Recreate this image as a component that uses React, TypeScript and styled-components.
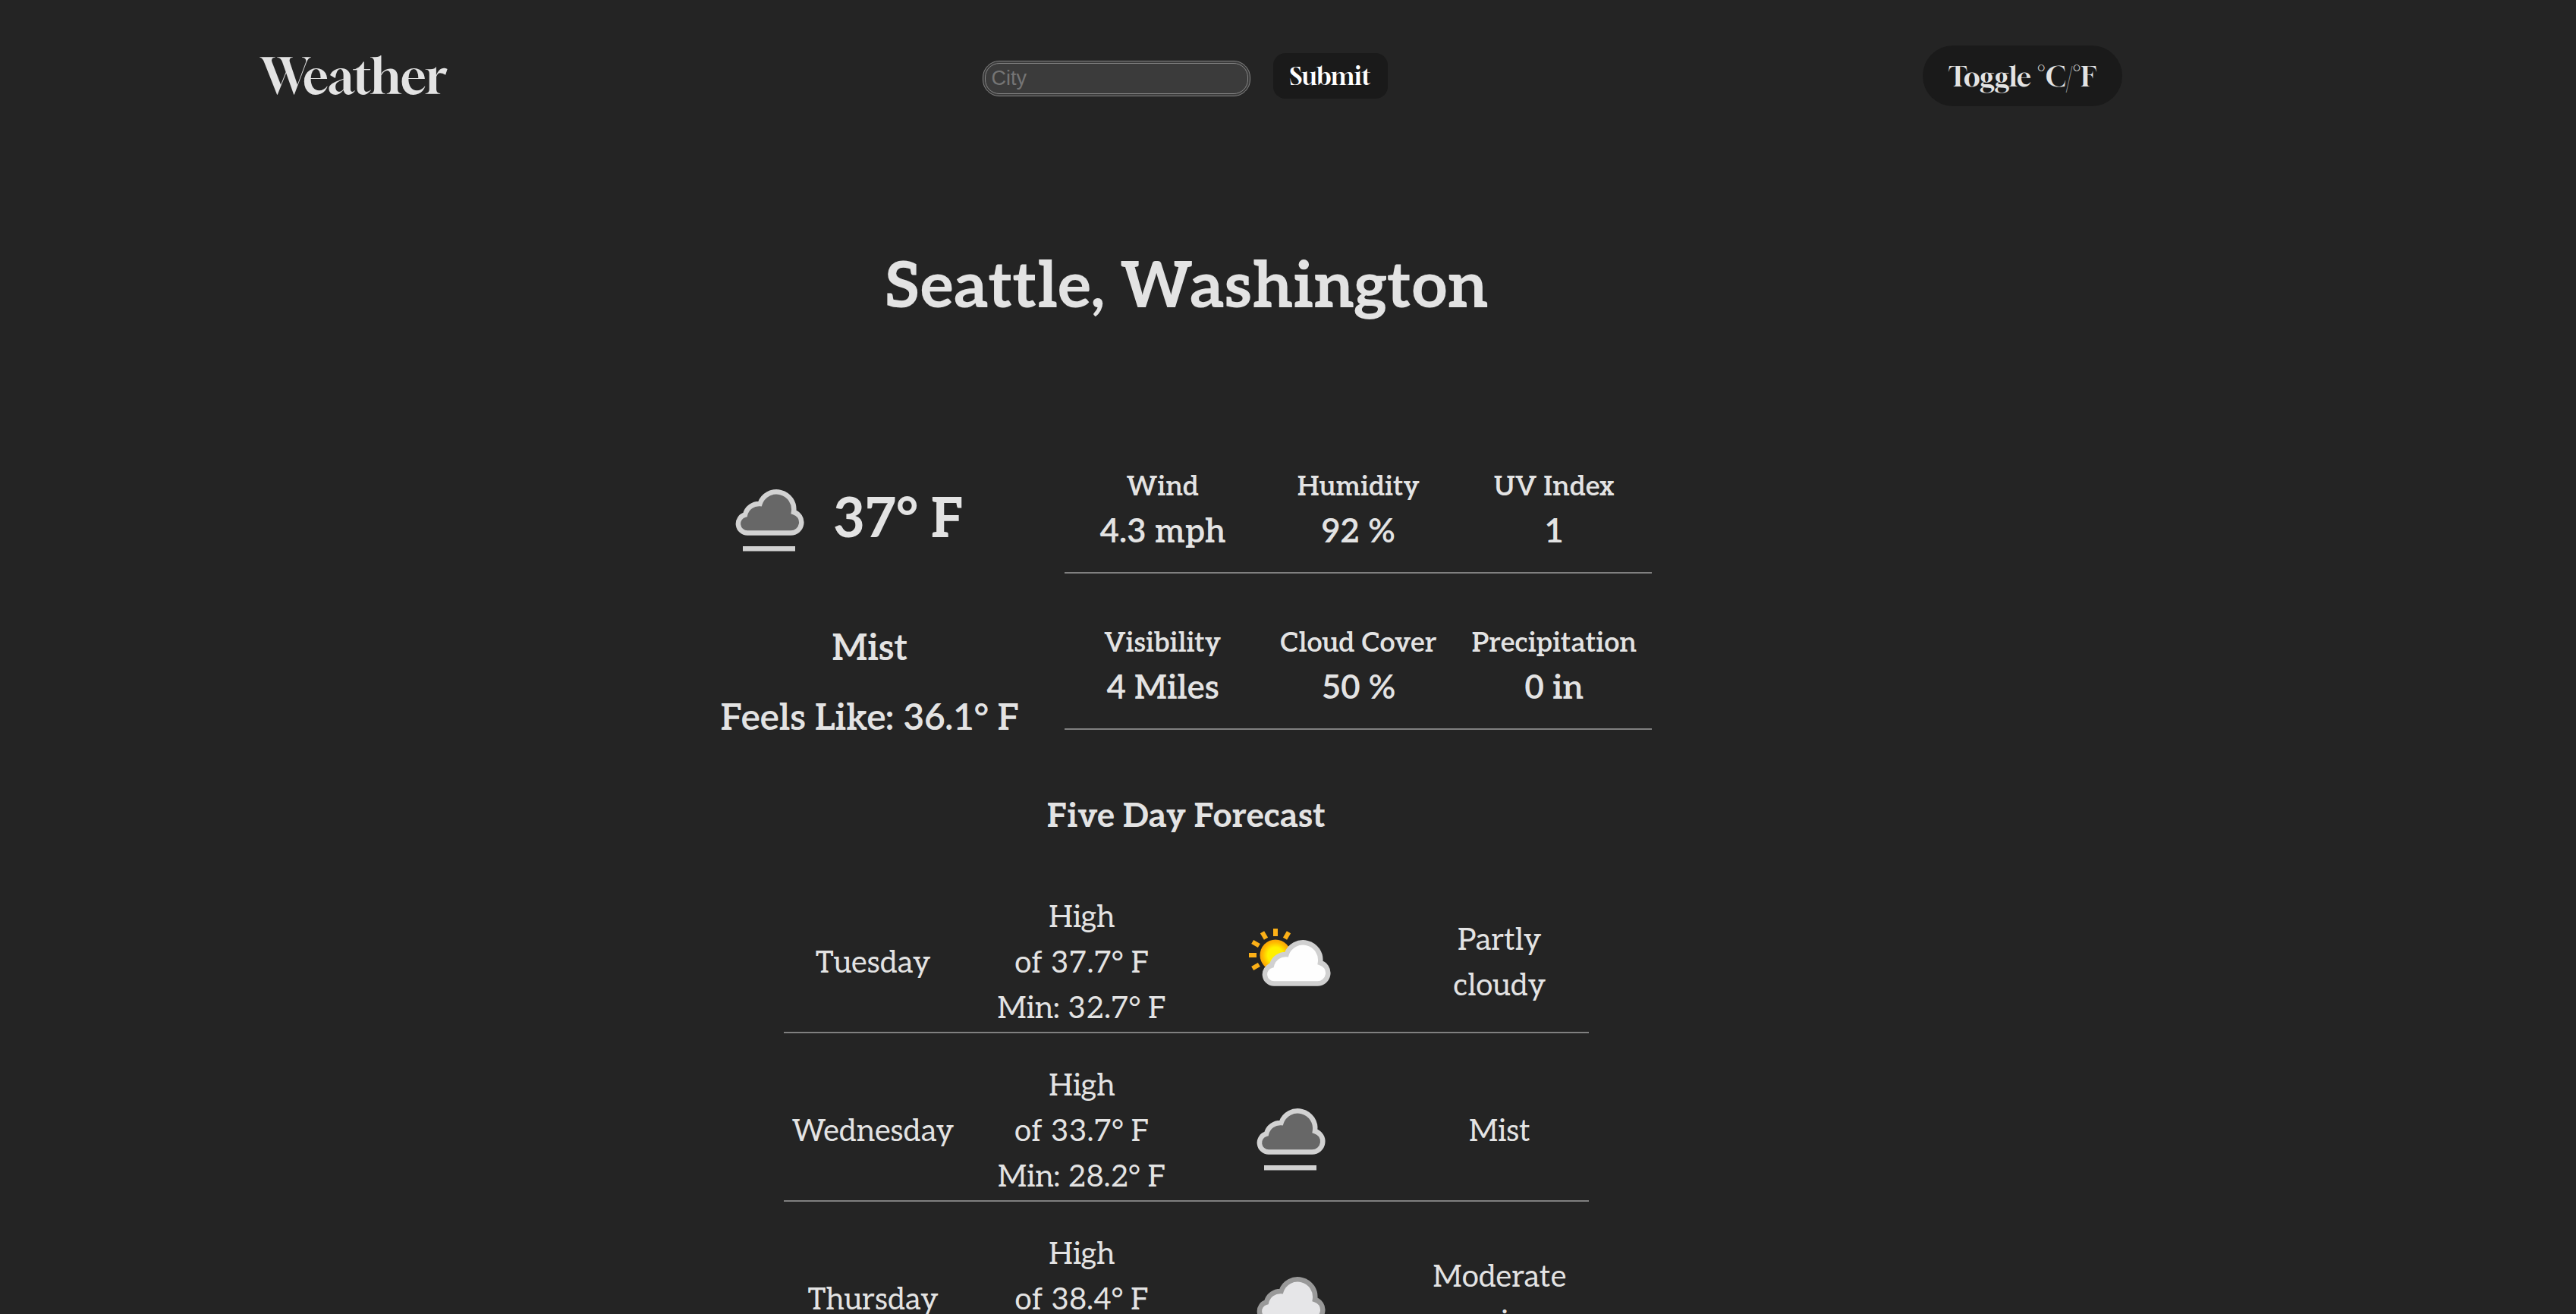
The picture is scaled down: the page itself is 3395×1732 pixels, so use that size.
import React, { useState } from "react";
import styled, { createGlobalStyle } from "styled-components";

const GlobalStyle = createGlobalStyle`
  *, *::before, *::after { box-sizing: border-box; }
  body {
    margin: 0;
    background: #242424;
    color: #e3e3e3;
    font-family: Aleo, "DejaVu Serif Condensed", "Liberation Serif", serif;
    font-size: 40px;
    line-height: 60px;
  }
  h1, h2, h3, p, dl, dt, dd, ul { margin: 0; padding: 0; }
`;

const displayFont = `Gloock, "DM Serif Display", "Liberation Serif", serif`;

const Header = styled.header`
  display: flex;
  align-items: center;
  justify-content: space-between;
  padding: 60px 598px 0 344px;
`;

const Logo = styled.h1`
  font-family: ${displayFont};
  font-size: 64px;
  line-height: 80px;
  font-weight: 400;
`;

const SearchForm = styled.form`
  display: flex;
  align-items: baseline;
  gap: 30px;
`;

const CityInput = styled.input`
  width: 353px;
  height: 47px;
  padding: 0 8px;
  border: 4px double #858585;
  border-radius: 22px;
  background: #3b3b3b;
  color: #e3e3e3;
  font-family: "Liberation Sans", Arial, sans-serif;
  font-size: 27px;

  &::placeholder { color: #757575; }
`;

const Button = styled.button<{ $pill?: boolean }>`
  height: ${(p) => (p.$pill ? 80 : 60)}px;
  padding: 0 ${(p) => (p.$pill ? 34 : 22)}px;
  border: 0;
  border-radius: ${(p) => (p.$pill ? 40 : 16)}px;
  background: #1a1a1a;
  color: ${(p) => (p.$pill ? "#e3e3e3" : "#ffffff")};
  font-family: ${displayFont};
  font-size: ${(p) => (p.$pill ? 36 : 32)}px;
  font-weight: 400;
  cursor: pointer;
`;

const Main = styled.main`
  display: flex;
  flex-direction: column;
  align-items: center;
  padding: 190px 268px 0 0;
`;

const Place = styled.h2`
  font-size: 84px;
  line-height: 100px;
  font-weight: 700;
`;

const Current = styled.section`
  display: flex;
  gap: 60px;
  margin-top: 182px;
`;

const Summary = styled.div`
  display: flex;
  flex-direction: column;
  gap: 20px;
  font-size: 48px;
  line-height: 72px;
  font-weight: 600;
  text-align: center;
`;

const Now = styled.div`
  display: flex;
  align-items: flex-end;
  gap: 20px;
  margin-bottom: 60px;
`;

const Temperature = styled.h2`
  font-size: 72px;
  line-height: 108px;
  font-weight: 700;
`;

const Stats = styled.div`
  display: flex;
  flex-direction: column;
  gap: 62px;
`;

const StatRow = styled.dl`
  display: grid;
  grid-template-columns: repeat(3, 258px);
  padding-bottom: 22px;
  border-bottom: 2px solid #808080;
  font-weight: 600;
  text-align: center;
`;

const StatLabel = styled.dt`
  font-size: 36px;
`;

const StatValue = styled.dd`
  font-size: 44px;
`;

const ForecastTitle = styled.h3`
  margin-top: 60px;
  font-size: 44px;
  line-height: 66px;
  font-weight: 700;
`;

const Forecast = styled.ul`
  display: flex;
  flex-direction: column;
  gap: 40px;
  width: 1061px;
  margin-top: 70px;
  list-style: none;
`;

const Day = styled.li`
  display: grid;
  grid-template-columns: repeat(4, 1fr);
  column-gap: 40px;
  align-items: center;
  justify-items: center;
  border-bottom: 2px solid #808080;
  text-align: center;
`;

const Temp = styled.span`
  display: block;
`;

const Icon = styled.svg`
  display: block;
  width: 128px;
  height: 128px;
`;

const Viewport = styled.div`
  height: 100vh;
  overflow: hidden;
`;

const cloudPath =
  "M35 90.5 A12.2 12.2 0 0 1 32 66.5 A19 19 0 0 1 51.5 52 A23 23 0 0 1 96 63 A14 14 0 0 1 92 90.5 Z";
const rayAngles = [180, 210, 240, 270, 300, 150];

type Sky = "mist" | "partly" | "rain";

function WeatherIcon({ sky }: { sky: Sky }) {
  if (sky === "partly") {
    return (
      <Icon viewBox="0 0 128 128" role="img" aria-label="Partly cloudy">
        <defs>
          <radialGradient id="sun">
            <stop offset="0.5" stopColor="#fff000" />
            <stop offset="0.85" stopColor="#ffb400" />
            <stop offset="1" stopColor="#f9a50a" />
          </radialGradient>
        </defs>
        {rayAngles.map((a) => (
          <rect key={a} x="69" y="50" width="10" height="6" fill="#fcb017" transform={`rotate(${a} 44 53)`} />
        ))}
        <circle cx="44" cy="53" r="20.5" fill="url(#sun)" />
        <path d={cloudPath} transform="translate(7 0)" fill="#fefefe" stroke="#d0d0d0" strokeWidth="6.5" />
      </Icon>
    );
  }
  if (sky === "rain") {
    return (
      <Icon viewBox="0 0 128 128" role="img" aria-label="Moderate rain">
        <path d={cloudPath} fill="#e6e6e8" stroke="#999999" strokeWidth="6.5" />
      </Icon>
    );
  }
  return (
    <Icon viewBox="0 0 128 128" role="img" aria-label="Mist">
      <path d={cloudPath} fill="#676767" stroke="#d2d2d2" strokeWidth="6.5" />
      <rect x="29" y="108" width="69" height="6.5" fill="#d2d2d2" />
    </Icon>
  );
}

const stats = [
  [["Wind", "4.3 mph"], ["Humidity", "92 %"], ["UV Index", "1"]],
  [["Visibility", "4 Miles"], ["Cloud Cover", "50 %"], ["Precipitation", "0 in"]],
];

const days: { name: string; high: number; min: number; sky: Sky; text: string }[] = [
  { name: "Tuesday", high: 37.7, min: 32.7, sky: "partly", text: "Partly cloudy" },
  { name: "Wednesday", high: 33.7, min: 28.2, sky: "mist", text: "Mist" },
  { name: "Thursday", high: 38.4, min: 33.1, sky: "rain", text: "Moderate rain" },
];

export default function App() {
  const [city, setCity] = useState("");
  return (
    <Viewport>
      <GlobalStyle />
      <Header>
        <Logo>Weather</Logo>
        <SearchForm onSubmit={(e) => e.preventDefault()}>
          <CityInput
            aria-label="City"
            placeholder="City"
            value={city}
            onChange={(e) => setCity(e.target.value)}
          />
          <Button type="submit">Submit</Button>
        </SearchForm>
        <Button type="button" $pill>Toggle °C/°F</Button>
      </Header>
      <Main>
        <Place>Seattle, Washington</Place>
        <Current>
          <Summary>
            <Now>
              <WeatherIcon sky="mist" />
              <Temperature>37° F</Temperature>
            </Now>
            <p>Mist</p>
            <p>Feels Like: 36.1° F</p>
          </Summary>
          <Stats>
            {stats.map((row) => (
              <StatRow key={row[0][0]}>
                {row.map(([label, value]) => (
                  <div key={label}>
                    <StatLabel>{label}</StatLabel>
                    <StatValue>{value}</StatValue>
                  </div>
                ))}
              </StatRow>
            ))}
          </Stats>
        </Current>
        <ForecastTitle>Five Day Forecast</ForecastTitle>
        <Forecast>
          {days.map((d) => (
            <Day key={d.name}>
              <span>{d.name}</span>
              <div>
                <Temp>High</Temp>
                <Temp>of {d.high}° F</Temp>
                <Temp>Min: {d.min}° F</Temp>
              </div>
              <WeatherIcon sky={d.sky} />
              <span>{d.text}</span>
            </Day>
          ))}
        </Forecast>
      </Main>
    </Viewport>
  );
}
